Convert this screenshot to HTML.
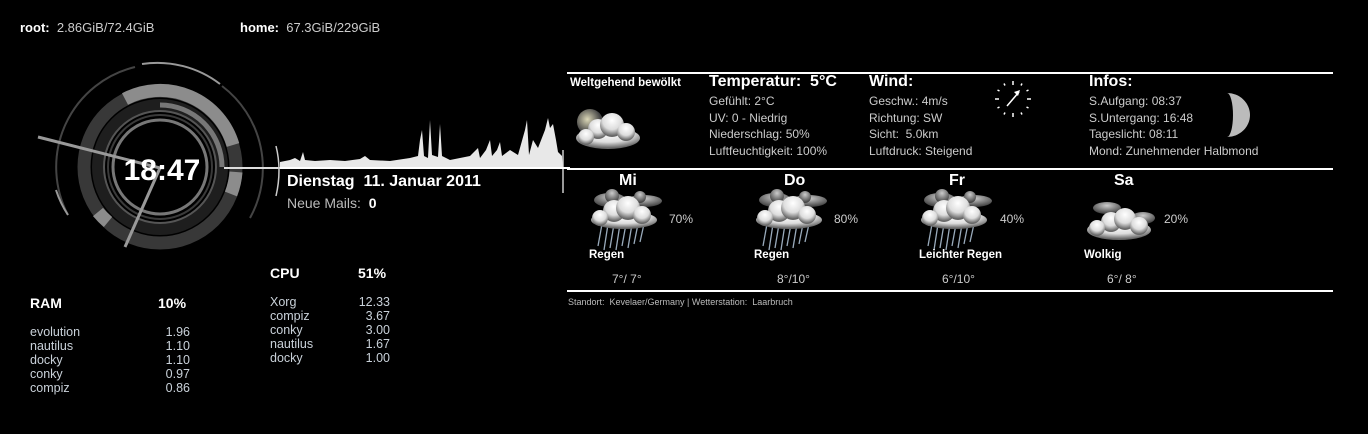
<!DOCTYPE html>
<html><head><meta charset="utf-8"><style>
body{margin:0;width:1368px;height:434px;background:#000;overflow:hidden;position:relative;font-family:"Liberation Sans",sans-serif;color:#ddd}
.a{position:absolute;white-space:nowrap}
.b{font-weight:bold;color:#fff}
.s{font-size:12px;color:#ccc;line-height:16.5px}
.p{font-size:12.5px;color:#c9d1d9;line-height:14px}
.hr{position:absolute;left:567px;width:766px;height:2px;background:#fff}
</style></head><body>
<div class="a" style="left:20px;top:20px;font-size:13px"><b style="color:#fff">root:</b>&nbsp; <span style="color:#ccc">2.86GiB/72.4GiB</span></div>
<div class="a" style="left:240px;top:20px;font-size:13px"><b style="color:#fff">home:</b>&nbsp; <span style="color:#ccc">67.3GiB/229GiB</span></div>

<svg class="a" style="left:0;top:0" width="570" height="260">
<g fill="none">
<path d="M68 215 A103 103 0 0 1 135 67" stroke="#444" stroke-width="2"/>
<path d="M56 190 A103 103 0 0 0 68 215" stroke="#999" stroke-width="2"/>
<path d="M142 64 A103 103 0 0 1 220 84" stroke="#999" stroke-width="2"/>
<path d="M222 86 A103 103 0 0 1 250 218" stroke="#444" stroke-width="2"/>
<circle cx="160" cy="167" r="76" stroke="#383838" stroke-width="13"/>
<path d="M125 99 A76 76 0 0 1 233 145" stroke="#8c8c8c" stroke-width="13"/>
<path d="M236 172 A76 76 0 0 1 231 194" stroke="#8c8c8c" stroke-width="13"/>
<path d="M108 222 A76 76 0 0 1 98 212" stroke="#8c8c8c" stroke-width="13"/>
<circle cx="160" cy="167" r="62" stroke="#1e1e1e" stroke-width="12"/>
<path d="M160 105 A62 62 0 0 1 222 167" stroke="#777" stroke-width="5"/>
<circle cx="160" cy="167" r="56" stroke="#555" stroke-width="2"/>
<circle cx="160" cy="167" r="52" stroke="#3a3a3a" stroke-width="2"/>
<circle cx="160" cy="167" r="47" stroke="#777" stroke-width="3"/>
<line x1="38" y1="137" x2="160" y2="168" stroke="#999" stroke-width="3"/>
<line x1="160" y1="168" x2="125" y2="247" stroke="#999" stroke-width="3"/>
<line x1="224" y1="168" x2="280" y2="168" stroke="#ddd" stroke-width="2"/>
<path d="M276 146 Q282 170 276 196" stroke="#ccc" stroke-width="1.5"/>
<line x1="563" y1="150" x2="563" y2="193" stroke="#ccc" stroke-width="1.5"/>
</g>
<path fill="#e8e8e8" d="M280 168 L280 162 285 161 290 160 295 158 300 161 303 152 305 160 315 161 330 160 345 161 360 159 365 156 370 160 390 161 410 158 418 156 420 140 422 130 424 156 428 158 430 120 432 155 438 157 440 124 442 156 450 160 460 158 470 156 478 148 480 158 486 150 490 140 492 156 497 150 500 142 502 156 510 150 518 155 525 130 527 120 529 155 533 140 538 148 545 130 548 118 550 128 553 124 556 140 558 152 562 156 563 168 Z"/>
<line x1="280" y1="168" x2="570" y2="168" stroke="#fff" stroke-width="2"/>
<text x="162" y="180" fill="#fff" font-size="30" font-weight="bold" text-anchor="middle" font-family="Liberation Sans">18:47</text>
</svg>

<div class="a b" style="left:287px;top:173px;font-size:16px">Dienstag&nbsp; 11. Januar 2011</div>
<div class="a" style="left:287px;top:195px;font-size:14px;color:#bbb">Neue Mails:&nbsp; <b style="color:#fff">0</b></div>

<div class="a b" style="left:270px;top:265px;font-size:14px">CPU</div>
<div class="a b" style="left:358px;top:265px;font-size:14px">51%</div>
<div class="a p" style="left:270px;top:295px">Xorg<br>compiz<br>conky<br>nautilus<br>docky</div>
<div class="a p" style="left:330px;top:295px;width:60px;text-align:right">12.33<br>3.67<br>3.00<br>1.67<br>1.00</div>
<div class="a b" style="left:30px;top:295px;font-size:14px">RAM</div>
<div class="a b" style="left:158px;top:295px;font-size:14px">10%</div>
<div class="a p" style="left:30px;top:325px">evolution<br>nautilus<br>docky<br>conky<br>compiz</div>
<div class="a p" style="left:130px;top:325px;width:60px;text-align:right">1.96<br>1.10<br>1.10<br>0.97<br>0.86</div>

<div class="hr" style="top:72px"></div>
<div class="hr" style="top:168px"></div>
<div class="hr" style="top:290px"></div>

<svg width="0" height="0" style="position:absolute"><defs>
<radialGradient id="c" cx="50%" cy="30%" r="65%"><stop offset="0" stop-color="#fff"/><stop offset=".6" stop-color="#ddd"/><stop offset="1" stop-color="#666"/></radialGradient>
<radialGradient id="m" cx="40%" cy="40%"><stop offset="0" stop-color="#dcd8b8"/><stop offset="1" stop-color="#444"/></radialGradient>
<radialGradient id="g" cx="50%" cy="30%" r="65%"><stop offset="0" stop-color="#ccc"/><stop offset="1" stop-color="#444"/></radialGradient>
</defs></svg>

<div class="a b" style="left:570px;top:77px;font-size:11.5px">Weltgehend bewölkt</div>
<svg class="a" style="left:570px;top:105px" width="90" height="50">
<circle cx="20" cy="17" r="13" fill="url(#m)"/>
<g fill="url(#c)"><ellipse cx="38" cy="33" rx="32" ry="11"/><circle cx="28" cy="24" r="10"/><circle cx="42" cy="20" r="12"/><circle cx="56" cy="27" r="9"/><circle cx="16" cy="32" r="8"/></g>
</svg>

<div class="a b" style="left:709px;top:73px;font-size:16px">Temperatur:&nbsp; 5°C</div>
<div class="a s" style="left:709px;top:93px">Gefühlt: 2°C<br>UV: 0 - Niedrig<br>Niederschlag: 50%<br>Luftfeuchtigkeit: 100%</div>
<div class="a b" style="left:869px;top:73px;font-size:16px">Wind:</div>
<div class="a s" style="left:869px;top:93px">Geschw.: 4m/s<br>Richtung: SW<br>Sicht:&nbsp; 5.0km<br>Luftdruck: Steigend</div>
<svg class="a" style="left:992px;top:78px" width="42" height="42"><g stroke="#fff" stroke-width="1.5">
<line x1="21" y1="3" x2="21" y2="7"/><line x1="21" y1="35" x2="21" y2="39"/><line x1="3" y1="21" x2="7" y2="21"/><line x1="35" y1="21" x2="39" y2="21"/>
<line x1="30" y1="5.5" x2="29" y2="7.5"/><line x1="12" y1="36.5" x2="13" y2="34.5"/><line x1="36.5" y1="12" x2="34.5" y2="13"/><line x1="5.5" y1="30" x2="7.5" y2="29"/>
<line x1="12" y1="5.5" x2="13" y2="7.5"/><line x1="30" y1="36.5" x2="29" y2="34.5"/><line x1="5.5" y1="12" x2="7.5" y2="13"/><line x1="36.5" y1="30" x2="34.5" y2="29"/>
<line x1="15" y1="28" x2="27" y2="14"/></g><path d="M28 12 L22 14 L26 18Z" fill="#fff"/></svg>
<div class="a b" style="left:1089px;top:73px;font-size:16px">Infos:</div>
<div class="a s" style="left:1089px;top:93px">S.Aufgang: 08:37<br>S.Untergang: 16:48<br>Tageslicht: 08:11<br>Mond: Zunehmender Halbmond</div>
<svg class="a" style="left:1222px;top:92px" width="28" height="46"><path d="M5 1 A23 22 0 0 1 5 45 A6 22 0 0 0 5 1Z" fill="#bbb"/></svg>

<div class="a b" style="left:619px;top:172px;font-size:16px">Mi</div>
<div class="a b" style="left:784px;top:172px;font-size:16px">Do</div>
<div class="a b" style="left:949px;top:172px;font-size:16px">Fr</div>
<div class="a b" style="left:1114px;top:172px;font-size:16px">Sa</div>

<svg class="a" style="left:588px;top:188px" width="700" height="65">
<g id="r">
<g stroke="#9ab" stroke-width="1.3"><line x1="14" y1="36" x2="10" y2="58"/><line x1="20" y1="36" x2="16" y2="62"/><line x1="26" y1="36" x2="22" y2="60"/><line x1="32" y1="36" x2="28" y2="62"/><line x1="38" y1="36" x2="34" y2="58"/><line x1="44" y1="36" x2="40" y2="60"/><line x1="50" y1="36" x2="46" y2="56"/><line x1="56" y1="36" x2="52" y2="54"/></g>
<g fill="url(#g)"><ellipse cx="22" cy="12" rx="16" ry="7"/><circle cx="24" cy="8" r="7"/><ellipse cx="56" cy="13" rx="18" ry="6"/><circle cx="52" cy="9" r="6"/></g>
<g fill="url(#c)"><ellipse cx="36" cy="32" rx="33" ry="9"/><circle cx="26" cy="23" r="11"/><circle cx="40" cy="20" r="12"/><circle cx="54" cy="27" r="9"/><circle cx="12" cy="30" r="8"/></g>
</g>
<use href="#r" x="165"/><use href="#r" x="330"/>
<g transform="translate(497,12)">
<g fill="url(#g)"><ellipse cx="22" cy="8" rx="14" ry="6"/><ellipse cx="58" cy="18" rx="12" ry="6"/></g>
<g fill="url(#c)"><ellipse cx="34" cy="30" rx="32" ry="10"/><circle cx="26" cy="22" r="10"/><circle cx="40" cy="19" r="11"/><circle cx="54" cy="26" r="9"/><circle cx="12" cy="28" r="8"/></g></g>
</svg>
<div class="a" style="left:669px;top:212px;font-size:12px;color:#ccc">70%</div>
<div class="a" style="left:834px;top:212px;font-size:12px;color:#ccc">80%</div>
<div class="a" style="left:1000px;top:212px;font-size:12px;color:#ccc">40%</div>
<div class="a" style="left:1164px;top:212px;font-size:12px;color:#ccc">20%</div>
<div class="a b" style="left:589px;top:249px;font-size:11.5px">Regen</div>
<div class="a b" style="left:754px;top:249px;font-size:11.5px">Regen</div>
<div class="a b" style="left:919px;top:249px;font-size:11.5px">Leichter Regen</div>
<div class="a b" style="left:1084px;top:249px;font-size:11.5px">Wolkig</div>
<div class="a" style="left:612px;top:272px;font-size:12px;color:#ccc">7°/ 7°</div>
<div class="a" style="left:777px;top:272px;font-size:12px;color:#ccc">8°/10°</div>
<div class="a" style="left:942px;top:272px;font-size:12px;color:#ccc">6°/10°</div>
<div class="a" style="left:1107px;top:272px;font-size:12px;color:#ccc">6°/ 8°</div>
<div class="a" style="left:568px;top:297px;font-size:9px;color:#bbb">Standort:&nbsp; Kevelaer/Germany | Wetterstation:&nbsp; Laarbruch</div>
</body></html>
